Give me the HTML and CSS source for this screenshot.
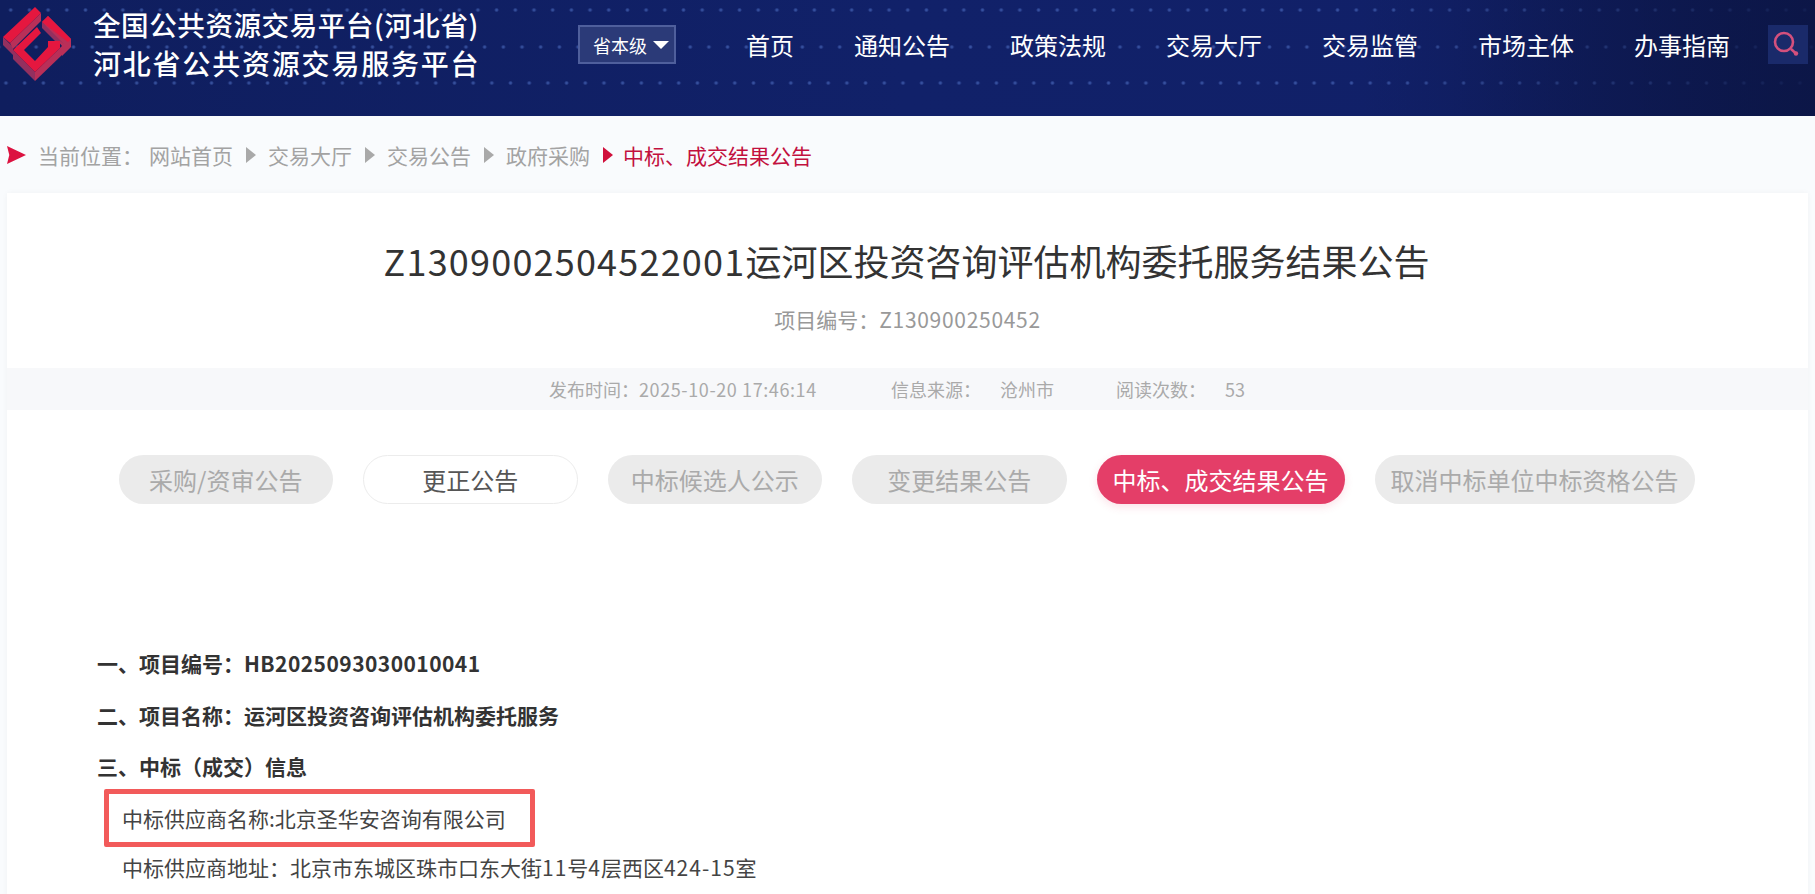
FILE: index.html
```html
<!DOCTYPE html>
<html lang="zh-CN">
<head>
<meta charset="utf-8">
<title>中标、成交结果公告</title>
<link rel="stylesheet" href="styles.css">
</head>
<body>
<header class="topbar">
  <svg class="logo" viewBox="0 0 72 82" aria-hidden="true">
    <polygon class="lg-side2" points="3,37 13,47 13,55 3,45"/>
    <polygon class="lg-side" points="41,13 41,21 13,49 10,43"/>
    <polygon class="lg-side" points="42,22 48,16 71,39 71,47 62,56 62,46"/>
    <polygon class="lg-side2" points="42,22 42,28 60,46 60,41 64,44"/>
    <polygon class="lg-side2" points="13,50 35,72 35,81 13,59"/>
    <polygon class="lg-side" points="35,72 62,46 62,55 35,81"/>
    <polygon class="lg-red" points="37,27 13,50 35,72 60,48 60,41 48,41 48,47 35,61 24,50 41,33"/>
    <polygon class="lg-red" points="35,7 41,13 10,43 3,37"/>
    <polygon class="lg-red" points="42,22 48,16 71,39 68,42"/>
  </svg>
  <div class="brand">
    <div class="brand-line brand-first">全国公共资源交易平台(河北省)</div>
    <div class="brand-line">河北省公共资源交易服务平台</div>
  </div>
  <div class="level"><span>省本级</span><i class="level-caret"></i></div>
  <nav class="nav">
    <a>首页</a><a>通知公告</a><a>政策法规</a><a>交易大厅</a><a>交易监管</a><a>市场主体</a><a>办事指南</a>
  </nav>
  <div class="search">
    <svg viewBox="0 0 40 39" aria-hidden="true">
      <circle cx="16" cy="17" r="9"/>
      <path d="M23 24l5 4.5"/>
      <circle class="search-dot" cx="28" cy="28.5" r="2.2"/>
    </svg>
  </div>
</header>

<div class="crumbs">
  <i class="crumb-lead"></i>
  <span class="crumb-label">当前位置：</span>
  <a>网站首页</a><i class="tri"></i>
  <a>交易大厅</a><i class="tri"></i>
  <a>交易公告</a><i class="tri"></i>
  <a>政府采购</a><i class="tri tri-red"></i>
  <a class="crumb-now">中标、成交结果公告</a>
</div>

<main class="card">
  <h1 class="title"><span class="title-no">Z1309002504522001</span>运河区投资咨询评估机构委托服务结果公告</h1>
  <p class="subno">项目编号：<span class="subno-no">Z130900250452</span></p>
  <div class="meta">
    <span class="meta-a">发布时间：<span class="meta-no">2025-10-20 17:46:14</span></span>
    <span class="meta-b">信息来源：</span>
    <span class="meta-c">沧州市</span>
    <span class="meta-b">阅读次数：</span>
    <span>53</span>
  </div>
  <div class="tabs">
    <a class="tab">采购/资审公告</a>
    <a class="tab tab-open">更正公告</a>
    <a class="tab">中标候选人公示</a>
    <a class="tab">变更结果公告</a>
    <a class="tab tab-active">中标、成交结果公告</a>
    <a class="tab">取消中标单位中标资格公告</a>
  </div>
  <article class="body">
    <p class="head">一、项目编号：<span class="head-no">HB2025093030010041</span></p>
    <p class="head">二、项目名称：运河区投资咨询评估机构委托服务</p>
    <p class="head">三、中标（成交）信息</p>
    <p class="mark">中标供应商名称:北京圣华安咨询有限公司</p>
    <p class="line">中标供应商地址：北京市东城区珠市口东大街<span class="num">11</span>号<span class="num">4</span>层西区<span class="num">424-15</span>室</p>
  </article>
</main>
</body>
</html>
```

FILE: styles.css
```css
* { box-sizing: border-box; }
html, body { margin: 0; height: 100%; overflow: hidden; }
body {
  background: #f9fbfd;
  font-family: "Noto Sans CJK SC", "Liberation Sans", sans-serif;
  color: #333;
}
p, h1 { margin: 0; }

.topbar {
  height: 116px;
  display: flex;
  align-items: flex-start;
  background-color: #102066;
  background-image:
    linear-gradient(90deg, rgba(10,22,70,0) 75%, rgba(12,22,70,.85) 100%),
    radial-gradient(circle, rgba(105,145,235,.42) .8px, rgba(105,145,235,0) 2.4px),
    radial-gradient(circle, rgba(105,145,235,.42) .8px, rgba(105,145,235,0) 2.4px),
    radial-gradient(circle, rgba(105,145,235,.42) .8px, rgba(105,145,235,0) 2.4px),
    linear-gradient(90deg, #0f1e5e 0%, #112169 50%, #112068 80%, #0c1850 100%);
  background-size: 100% 100%, 18.7px 20px, 18.7px 20px, 18.7px 20px, 100% 100%;
  background-position: 0 0, 1.4px 0, 8.1px 37px, -3.4px 73px, 0 0;
  background-repeat: no-repeat, repeat-x, repeat-x, repeat-x, no-repeat;
}
.logo { width: 72px; height: 82px; flex: none; }
.lg-red { fill: #e5173f; }
.lg-side { fill: #b92f58; }
.lg-side2 { fill: #93305f; }
.brand { margin: 5px 0 0 21px; width: 485px; flex: none; color: #fff; }
.brand-line { font-size: 28px; line-height: 39px; letter-spacing: 1.8px; font-weight: 500; white-space: nowrap; }
.brand-first { letter-spacing: .5px; font-size: 27.6px; }
.level {
  width: 98px; height: 39px; margin-top: 25px; flex: none;
  display: flex; align-items: center; gap: 6px; padding-left: 13px;
  border: 2px solid #4f5f9c; background: #2b3a78;
  color: #fff; font-size: 18px;
}
.level-caret { width: 0; height: 0; border: 8px solid transparent; border-top: 8px solid #fff; border-bottom: 0; }
.nav { display: flex; gap: 60px; margin: 27px 0 0 70px; flex: none; }
.nav a { font-size: 24px; line-height: 36px; color: #fff; white-space: nowrap; }
.search { width: 40px; height: 39px; margin: 25px 0 0 38px; background: #1a2a6a; flex: none; }
.search svg { display: block; width: 40px; height: 39px; fill: none; stroke: #d4507d; stroke-width: 2.6; }
.search .search-dot { fill: #d4507d; stroke: none; }

.crumbs {
  height: 77px;
  display: flex; align-items: center;
  padding: 1px 0 0 7px;
  font-size: 21px; color: #a3a3a3; white-space: nowrap;
}
.crumb-lead {
  width: 19px; height: 18px; margin-right: 12px;
  background: #dc1240;
  clip-path: polygon(0 0, 100% 50%, 0 100%, 12% 50%);
}
.crumb-label { width: 111px; }
.tri { width: 0; height: 0; margin: 0 12px 0 13px; border: 8px solid transparent; border-left: 10px solid #a9a9a9; border-right: 0; }
.tri-red { border-left-color: #d0103c; margin-right: 10px; }
.crumb-now { color: #c2103e; }

.card {
  margin: 0 7px;
  height: 720px;
  background: #fff;
  box-shadow: 0 0 6px rgba(0,0,0,.04);
  overflow: hidden;
}
.title { margin-top: 41px; padding-right: 2px; text-align: center; font-size: 36px; line-height: 52px; font-weight: 400; color: #333; }
.title-no { letter-spacing: 1.2px; }
.subno { margin-top: 18px; text-align: center; font-size: 21px; line-height: 30px; color: #999; }
.subno-no { letter-spacing: .7px; }
.meta {
  margin-top: 34px; height: 42px;
  display: flex; align-items: center; padding-left: 542px;
  background: #f7f8fa;
  font-size: 18px; color: #aaa; white-space: nowrap;
}
.meta-no { letter-spacing: .6px; }
.meta-a { width: 342px; }
.meta-b { width: 109px; }
.meta-c { width: 116px; }
.tabs { margin-top: 45px; padding-right: 2px; display: flex; justify-content: center; gap: 30px; }
.tab {
  min-width: 214.5px; height: 49px; padding: 0 16px;
  display: flex; align-items: center; justify-content: center;
  border-radius: 25px; background: #ebebeb;
  font-size: 24px; color: #aaa; white-space: nowrap;
}
.tab-open { background: #fff; border: 1px solid #ececec; color: #555; }
.tab-active { background: #e43e68; color: #fff; box-shadow: 0 3px 8px rgba(228,62,104,.15); }

.body { margin-top: 134px; padding-left: 90px; font-size: 21px; }
.head { font-weight: 700; line-height: 51.5px; color: #333; height: 51.5px; }
.head-no { letter-spacing: .45px; }
.mark {
  width: 431px; height: 58px; margin: -4px 0 0 7px;
  display: flex; align-items: center; padding-left: 13px;
  border: 5px solid #f25a5a; border-radius: 2px;
  color: #444; white-space: nowrap;
}
.line { margin: 4px 0 0 25px; line-height: 32px; color: #444; white-space: nowrap; }
.num { letter-spacing: 1px; }
```
